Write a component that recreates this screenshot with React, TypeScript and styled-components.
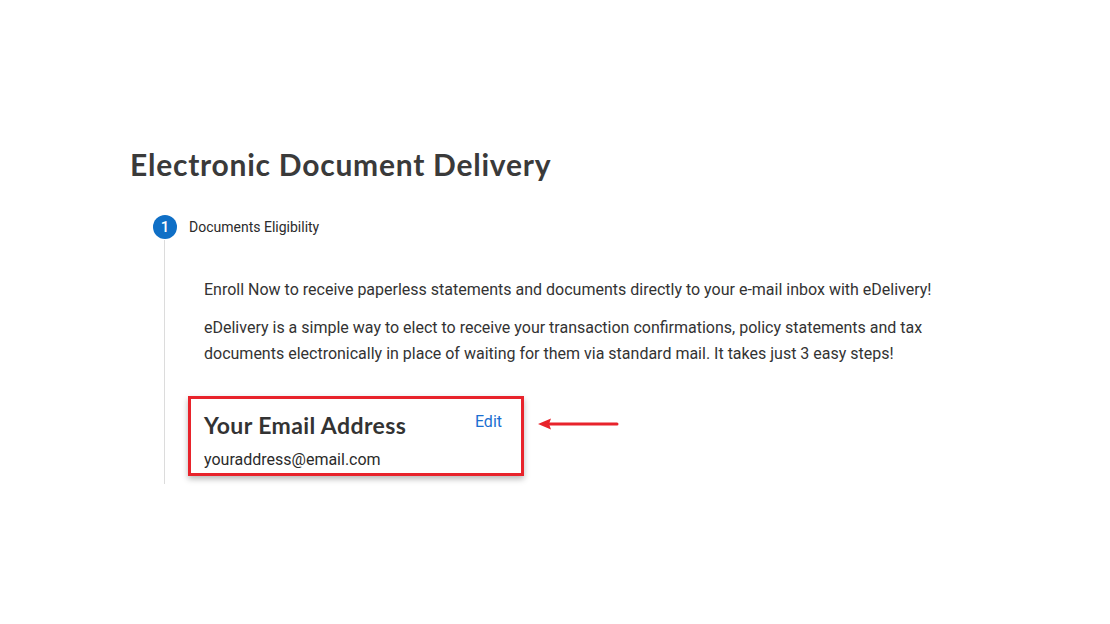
import styled, { createGlobalStyle } from "styled-components";

const GlobalStyle = createGlobalStyle`
  body {
    margin: 0;
    background: #ffffff;
    font-family: Roboto, "Liberation Sans", sans-serif;
  }
`;

// ─── Layout ────────────────────────────
const Page = styled.main`
  width: 1110px;
  height: 624px;
  padding: 146px 0 0 130px;
  box-sizing: border-box;
`;

const Title = styled.h1`
  margin: 0;
  font-family: Lato, "Open Sans", sans-serif;
  font-size: 30px;
  font-weight: 700;
  color: #3a3a3a;
  letter-spacing: 0.75px;
  line-height: 36px;
`;

const Stepper = styled.section`
  margin: 33px 0 0 23px;
`;

const StepHeader = styled.div`
  display: flex;
  align-items: center;
  gap: 12px;
`;

const StepNumber = styled.span`
  width: 24px;
  height: 24px;
  border-radius: 50%;
  background: #0f6fc6;
  color: #ffffff;
  font-size: 15px;
  font-weight: 500;
  display: flex;
  align-items: center;
  justify-content: center;
`;

const StepLabel = styled.span`
  font-size: 14px;
  color: #2b2b2b;
`;

const StepBody = styled.div`
  margin: 1px 0 0 11px;
  border-left: 1px solid #dcdcdc;
  padding: 37px 0 8px 39px;
`;

const Para = styled.p`
  margin: 0 0 12px;
  width: 760px;
  font-size: 16px;
  line-height: 26px;
  color: #333333;
`;

const CardRow = styled.div`
  display: flex;
  align-items: flex-start;
  margin: 29px 0 0 -16px;
`;

const EmailCard = styled.div`
  width: 336px;
  height: 80px;
  box-sizing: border-box;
  border: 3px solid #e8232b;
  padding: 12px 19px 0 13px;
  box-shadow: 0 3px 6px rgba(0, 0, 0, 0.28);
  background: #ffffff;
`;

const CardTop = styled.div`
  display: flex;
  justify-content: space-between;
  align-items: flex-start;
`;

const CardTitle = styled.h2`
  margin: 0;
  font-family: Lato, "Open Sans", sans-serif;
  font-size: 23px;
  font-weight: 700;
  color: #333333;
  letter-spacing: 0.4px;
  line-height: 28px;
`;

const EditLink = styled.a`
  font-size: 16px;
  color: #1a6fd1;
  text-decoration: none;
  line-height: 22px;
  cursor: pointer;
`;

const EmailText = styled.div`
  margin-top: 10px;
  font-size: 16px;
  color: #2b2b2b;
  line-height: 22px;
`;

const Arrow = styled.svg`
  width: 82px;
  height: 14px;
  margin: 21px 0 0 13px;
  flex-shrink: 0;
`;

export default function App() {
  return (
    <>
      <GlobalStyle />
      <Page>
        <Title>Electronic Document Delivery</Title>
        <Stepper>
          <StepHeader>
            <StepNumber>1</StepNumber>
            <StepLabel>Documents Eligibility</StepLabel>
          </StepHeader>
          <StepBody>
            <Para>
              Enroll Now to receive paperless statements and documents directly to your e-mail inbox with eDelivery!
            </Para>
            <Para>
              eDelivery is a simple way to elect to receive your transaction confirmations, policy statements and tax
              documents electronically in place of waiting for them via standard mail. It takes just 3 easy steps!
            </Para>
            <CardRow>
              <EmailCard>
                <CardTop>
                  <CardTitle>Your Email Address</CardTitle>
                  <EditLink>Edit</EditLink>
                </CardTop>
                <EmailText>youraddress@email.com</EmailText>
              </EmailCard>
              <Arrow viewBox="0 0 82 14">
                <path d="M1 7 L14 1.5 L12 7 L14 12.5 Z" fill="#e8232b" />
                <line x1="10" y1="7" x2="80" y2="7" stroke="#e8232b" strokeWidth="3" strokeLinecap="round" />
              </Arrow>
            </CardRow>
          </StepBody>
        </Stepper>
      </Page>
    </>
  );
}
